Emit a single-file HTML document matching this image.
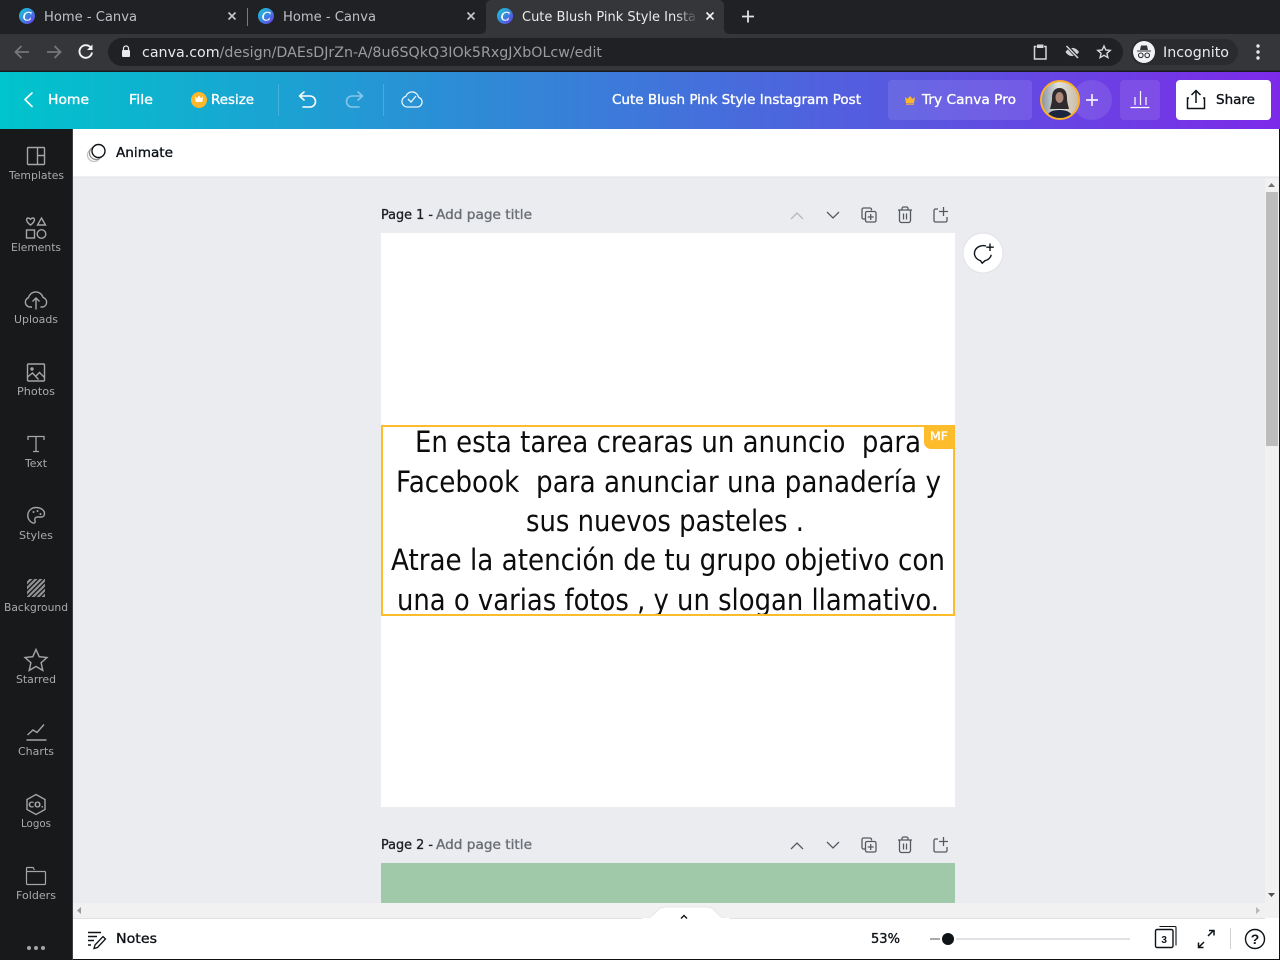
<!DOCTYPE html>
<html><head><meta charset="utf-8"><title>Cute Blush Pink Style Instagram Post - Canva</title>
<style>
html,body{margin:0;padding:0;width:1280px;height:960px;overflow:hidden;background:#ebecf0}
svg{display:block}
text{font-family:"Liberation Sans",sans-serif}
.d{font-family:"DejaVu Sans",sans-serif}
.m{font-family:"DejaVu Sans",sans-serif;font-size:13.5px;stroke-width:.35px}
.side text{font-family:"DejaVu Sans",sans-serif;font-size:11px;fill:#a9aaac}
.si{fill:none;stroke:#a4a5a7;stroke-width:1.4}
.pa{fill:none;stroke:#55595f;stroke-width:1.3}
.w{fill:none;stroke:#fff;stroke-width:1.6;stroke-linecap:round;stroke-linejoin:round}
</style></head><body>
<svg width="1280" height="960" viewBox="0 0 1280 960" xmlns="http://www.w3.org/2000/svg">
<defs>
<linearGradient id="hd" x1="0" y1="0" x2="1280" y2="0" gradientUnits="userSpaceOnUse"><stop offset="0" stop-color="#00c4cc"/><stop offset="1" stop-color="#7d2ae8"/></linearGradient>
<linearGradient id="fav" x1="0" y1="0" x2="1" y2="1"><stop offset="0" stop-color="#14cfd6"/><stop offset=".55" stop-color="#3d7fe0"/><stop offset="1" stop-color="#7030e8"/></linearGradient>
<linearGradient id="fade" x1="0" x2="1"><stop offset="0" stop-color="#35363a" stop-opacity="0"/><stop offset="1" stop-color="#35363a"/></linearGradient>
<linearGradient id="ph" x1="0" x2="1"><stop offset="0" stop-color="#7f8d97"/><stop offset=".45" stop-color="#dfe2e0"/><stop offset="1" stop-color="#c8b9a0"/></linearGradient>
<clipPath id="av"><circle cx="1060" cy="100" r="18.5"/></clipPath>
<clipPath id="hatch"><rect x="27" y="579" width="18" height="18"/></clipPath>
</defs>

<!-- Chrome -->
<rect width="1280" height="72" fill="#202124"/>
<path d="M480 34c4 0 6-2 6-6V6c0-4 2-6 6-6h226c4 0 6 2 6 6v22c0 4 2 6 6 6z" fill="#35363a"/>
<rect y="34" width="1280" height="36.500" fill="#35363a"/>
<rect y="70.500" width="1280" height="1.500" fill="#1a1b1d"/>
<rect x="247" y="8" width="1" height="18" fill="#7a7c80"/>

<g>
<circle cx="27" cy="16" r="8" fill="url(#fav)"/><circle cx="266" cy="16" r="8" fill="url(#fav)"/><circle cx="505" cy="16" r="8" fill="url(#fav)"/>
<text x="27" y="20.500" font-size="13" fill="#fff" stroke="#fff" stroke-width=".4" text-anchor="middle" font-style="italic" style="font-family:'Liberation Serif',serif">C</text>
<text x="266" y="20.500" font-size="13" fill="#fff" stroke="#fff" stroke-width=".4" text-anchor="middle" font-style="italic" style="font-family:'Liberation Serif',serif">C</text>
<text x="505" y="20.500" font-size="13" fill="#fff" stroke="#fff" stroke-width=".4" text-anchor="middle" font-style="italic" style="font-family:'Liberation Serif',serif">C</text>
</g>
<text class="d" x="44" y="21" font-size="13" fill="#bdc1c6" textLength="93" lengthAdjust="spacingAndGlyphs">Home - Canva</text>
<text class="d" x="283" y="21" font-size="13" fill="#bdc1c6" textLength="93" lengthAdjust="spacingAndGlyphs">Home - Canva</text>
<text class="d" x="522" y="21" font-size="13" fill="#e8eaed" textLength="174" lengthAdjust="spacingAndGlyphs">Cute Blush Pink Style Insta</text>
<rect x="676" y="6" width="22" height="20" fill="url(#fade)"/>
<g stroke-width="1.600" fill="none">
<path d="M228.500 12.500l7 7m0-7l-7 7M467.500 12.500l7 7m0-7l-7 7" stroke="#c4c7cb"/>
<path d="M706.500 12.500l7 7m0-7l-7 7" stroke="#f1f3f4"/>
<path d="M748 10.500v12M742 16.500h12" stroke="#dfe1e5" stroke-width="1.800"/>
</g>

<!-- toolbar -->
<path d="M29 52H16m5.500-6l-6 6 6 6" fill="none" stroke="#75777b" stroke-width="1.800"/>
<path d="M47 52h13m-5.500-6l6 6-6 6" fill="none" stroke="#75777b" stroke-width="1.800"/>
<path d="M91 48a6.300 6.300 0 1 0 1 4.500" fill="none" stroke="#f1f3f4" stroke-width="1.900"/><path d="M92.500 44.500v5.500H87z" fill="#f1f3f4"/>
<rect x="108" y="38" width="1015" height="28" rx="14" fill="#202124"/>
<rect x="122" y="50" width="8" height="7" rx="1" fill="#e8eaed"/><path d="M123.500 50v-1.500a2.500 2.500 0 0 1 5 0V50" fill="none" stroke="#e8eaed" stroke-width="1.200"/>
<text class="d" x="142" y="57" font-size="14" fill="#9a9ca0" textLength="460" lengthAdjust="spacingAndGlyphs"><tspan fill="#e8eaed">canva.com</tspan>/design/DAEsDJrZn-A/8u6SQkQ3IOk5RxgJXbOLcw/edit</text>
<path d="M1036.500 46.500h-2v12.500h11.500V46.500h-2" fill="none" stroke="#d5d7da" stroke-width="1.500"/><rect x="1037" y="44.500" width="6.500" height="3.500" fill="#d5d7da"/>
<path d="M1065.500 52c3.500-5.500 10-5.500 13.500 0-3.500 5.500-10 5.500-13.500 0z" fill="#d0d2d5"/><path d="M1067 46l11 12" stroke="#202124" stroke-width="3.500"/><path d="M1066.500 46l11.500 12" stroke="#d0d2d5" stroke-width="1.600"/>
<path d="M1104 46l1.800 4 4.400.4-3.300 2.900 1 4.300-3.900-2.300-3.900 2.300 1-4.300-3.300-2.900 4.400-.4z" fill="none" stroke="#d5d7da" stroke-width="1.400"/>
<rect x="1131" y="39" width="107" height="26" rx="13" fill="#2a2b2e"/>
<circle cx="1144" cy="52" r="11" fill="#f1f3f4"/>
<path d="M1137 50.500h14v1h-14zM1140 50l1-4.500h6l1 4.500z" fill="#35363a"/><circle cx="1140.800" cy="55.300" r="2.300" fill="none" stroke="#35363a" stroke-width="1.100"/><circle cx="1147.200" cy="55.300" r="2.300" fill="none" stroke="#35363a" stroke-width="1.100"/>
<text class="d" x="1163" y="57" font-size="14" fill="#e8eaed" textLength="66" lengthAdjust="spacingAndGlyphs">Incognito</text>
<g fill="#e8eaed"><circle cx="1258" cy="46" r="1.700"/><circle cx="1258" cy="52" r="1.700"/><circle cx="1258" cy="58" r="1.700"/></g>

<!-- Canva header -->
<rect y="72" width="1280" height="57" fill="url(#hd)"/>
<path class="w" d="M32 93l-7 6.500 7 7"/>
<g fill="#fff" stroke="#fff">
<text class="m" x="48" y="104" textLength="41" lengthAdjust="spacingAndGlyphs">Home</text>
<text class="m" x="129" y="104" textLength="24" lengthAdjust="spacingAndGlyphs">File</text>
<text class="m" x="211" y="104" textLength="43" lengthAdjust="spacingAndGlyphs">Resize</text>
<text class="m" x="612" y="104" textLength="249" lengthAdjust="spacingAndGlyphs">Cute Blush Pink Style Instagram Post</text>
<text class="m" x="922" y="104" textLength="94" lengthAdjust="spacingAndGlyphs">Try Canva Pro</text>
</g>
<circle cx="199" cy="100" r="8" fill="#fdb72c"/>
<path d="M195 96.500l2 2 2-3 2 3 2-2-.7 5.500h-6.600z" fill="#fff"/>
<rect x="278" y="84" width="1" height="32" fill="#fff" opacity=".18"/>
<rect x="383" y="84" width="1" height="32" fill="#fff" opacity=".18"/>
<path class="w" d="M304 92l-4.500 4 4.500 4M300 96h10a5.500 5.500 0 0 1 0 11h-7"/>
<path class="w" opacity=".45" d="M358 92l4.500 4-4.500 4M362 96h-10a5.500 5.500 0 0 0 0 11h7"/>
<path d="M407 107h10a5 5 0 0 0 1.500-9.800 6.500 6.500 0 0 0-12.500-1 5.500 5.500 0 0 0 1 10.800z" fill="none" stroke="#fff" stroke-width="1.300" opacity=".9"/><path d="M408 99l3 3 5-6" fill="none" stroke="#fff" stroke-width="1.300" opacity=".9"/>

<rect x="888" y="80" width="144" height="40" rx="4" fill="#fff" opacity=".1"/>
<path d="M905 97l2.500 2 2.500-3 2.500 3 2.500-2-1 6h-8z" fill="#fdb72c"/><rect x="906" y="103.500" width="8" height="1.200" fill="#fdb72c"/>
<circle cx="1092" cy="100" r="20" fill="#fff" opacity=".1"/>
<path d="M1092 94v12M1086 100h12" stroke="#fff" stroke-width="1.700" opacity=".9"/>
<g clip-path="url(#av)">
<rect x="1040" y="80" width="40" height="40" fill="url(#ph)"/>
<path d="M1052 98c0-7 3-10 7.500-10s7.500 3 7.500 10c0 4 1 7 2 11h-19c1-4 2-7 2-11z" fill="#2f2a2d"/>
<ellipse cx="1059.500" cy="97.500" rx="4" ry="5.500" fill="#b08a78"/>
<path d="M1046 120c1-8 6-10 13.500-10s12.500 2 14 10z" fill="#1b2540"/>
</g>
<circle cx="1060" cy="100" r="19" fill="none" stroke="#fdb02c" stroke-width="2"/>
<rect x="1120" y="80" width="40" height="40" rx="4" fill="#fff" opacity=".1"/>
<path d="M1130.500 107.500h19M1135 105V97M1140.500 105V91M1146 105V97" stroke="#fff" stroke-width="1.200" fill="none"/>
<rect x="1176" y="80" width="95" height="40" rx="4" fill="#fff"/>
<path d="M1189 98h-1.500v10.500h17V98H1203M1196 103V90.500M1191.500 95l4.500-4.500 4.500 4.500" fill="none" stroke="#0e1318" stroke-width="1.500"/>
<text class="m" x="1216" y="104" fill="#0e1318" stroke="#0e1318" textLength="39" lengthAdjust="spacingAndGlyphs">Share</text>

<!-- Editor background -->
<rect x="73" y="129" width="1207" height="831" fill="#ebecf0"/>
<rect x="73" y="129" width="1207" height="48" fill="#fff"/>
<rect x="73" y="176.500" width="1207" height="1" fill="#dfe1e5"/>
<circle cx="94" cy="155" r="6.500" fill="#fff" stroke="#c0c1c3" stroke-width="1.300"/>
<circle cx="96" cy="153" r="6.500" fill="#fff" stroke="#8c8d8f" stroke-width="1.300"/>
<circle cx="98.500" cy="151" r="6.500" fill="#fff" stroke="#0e1318" stroke-width="1.400"/>
<text class="m" x="116" y="157" fill="#0e1318" stroke="#0e1318" textLength="57" lengthAdjust="spacingAndGlyphs">Animate</text>

<!-- Page 1 -->
<text class="m" x="381" y="219" fill="#1d2126" stroke="#1d2126" textLength="52" lengthAdjust="spacingAndGlyphs">Page 1 -</text>
<text class="m" x="436" y="219" fill="#6b6f76" stroke="#6b6f76" textLength="96" lengthAdjust="spacingAndGlyphs">Add page title</text>
<path d="M791 219l6-6 6 6" fill="none" stroke="#b5b7bb" stroke-width="1.300"/>
<path d="M827 212l6 6 6-6" fill="none" stroke="#55595f" stroke-width="1.300"/>
<g class="pa" id="acts">
<path d="M865.500 219h-2a1.500 1.500 0 0 1-1.500-1.500v-8a1.500 1.500 0 0 1 1.500-1.500h6.500a1.500 1.500 0 0 1 1.500 1.500v1"/><rect x="865.500" y="211.500" width="10.500" height="10.500" rx="1.500"/><path d="M870.700 214v6M867.700 217h6"/>
<path d="M898 210h14M902 210v-1.500a1.500 1.500 0 0 1 1.500-1.500h3a1.500 1.500 0 0 1 1.500 1.500V210M899.500 210v10.500a2 2 0 0 0 2 2h7a2 2 0 0 0 2-2V210M903.500 213.500v6M906.500 213.500v6"/>
<path d="M938 209h-2.500a1.500 1.500 0 0 0-1.500 1.500v10a1.500 1.500 0 0 0 1.500 1.500h10a1.500 1.500 0 0 0 1.500-1.500V217M943.500 207v9M939 211.500h9"/>
</g>
<rect x="381" y="233" width="574" height="574" fill="#fff"/>
<circle cx="983" cy="253" r="20.500" fill="#000" opacity=".04"/>
<circle cx="983" cy="253" r="19.500" fill="#fff"/>
<path d="M986 246a8.500 7.500 0 1 0-5.500 14.700l1.700 2.500 2.800-2.500c3-.6 5.700-3 6.300-6" fill="none" stroke="#0e1318" stroke-width="1.400"/>
<path d="M990 243.500v7.500M986.300 247.200h7.500" stroke="#0e1318" stroke-width="1.400" fill="none"/>

<g font-size="29" fill="#0c0c0c">
<text class="d" x="415" y="452" textLength="506" lengthAdjust="spacingAndGlyphs" xml:space="preserve">En esta tarea crearas un anuncio  para</text>
<text class="d" x="396" y="492" textLength="545" lengthAdjust="spacingAndGlyphs" xml:space="preserve">Facebook  para anunciar una panadería y</text>
<text class="d" x="526" y="531" textLength="278" lengthAdjust="spacingAndGlyphs">sus nuevos pasteles .</text>
<text class="d" x="391" y="570" textLength="554" lengthAdjust="spacingAndGlyphs">Atrae la atención de tu grupo objetivo con</text>
<text class="d" x="397" y="610" textLength="542" lengthAdjust="spacingAndGlyphs">una o varias fotos , y un slogan llamativo.</text>
</g>
<rect x="382" y="426" width="572" height="189" fill="none" stroke="#fdbc2c" stroke-width="2"/>
<path d="M924 425h31v24h-24a7 7 0 0 1-7-7z" fill="#fdbc2c"/>
<text class="d" x="930" y="440" font-size="11.500" fill="#fff" stroke="#fff" stroke-width=".3" textLength="18" lengthAdjust="spacingAndGlyphs">MF</text>

<!-- Page 2 -->
<text class="m" x="381" y="849" fill="#1d2126" stroke="#1d2126" textLength="52" lengthAdjust="spacingAndGlyphs">Page 2 -</text>
<text class="m" x="436" y="849" fill="#6b6f76" stroke="#6b6f76" textLength="96" lengthAdjust="spacingAndGlyphs">Add page title</text>
<path d="M791 849l6-6 6 6" fill="none" stroke="#55595f" stroke-width="1.300"/>
<path d="M827 842l6 6 6-6" fill="none" stroke="#55595f" stroke-width="1.300"/>
<g class="pa" transform="translate(0 630)">
<path d="M865.500 219h-2a1.500 1.500 0 0 1-1.500-1.500v-8a1.500 1.500 0 0 1 1.500-1.500h6.500a1.500 1.500 0 0 1 1.500 1.500v1"/><rect x="865.500" y="211.500" width="10.500" height="10.500" rx="1.500"/><path d="M870.700 214v6M867.700 217h6"/>
<path d="M898 210h14M902 210v-1.500a1.500 1.500 0 0 1 1.500-1.500h3a1.500 1.500 0 0 1 1.500 1.500V210M899.500 210v10.500a2 2 0 0 0 2 2h7a2 2 0 0 0 2-2V210M903.500 213.500v6M906.500 213.500v6"/>
<path d="M938 209h-2.500a1.500 1.500 0 0 0-1.500 1.500v10a1.500 1.500 0 0 0 1.500 1.500h10a1.500 1.500 0 0 0 1.500-1.500V217M943.500 207v9M939 211.500h9"/>
</g>
<rect x="381" y="863" width="574" height="40" fill="#a0c9aa"/>

<!-- Scrollbars -->
<rect x="1265" y="178" width="14" height="740" fill="#f1f1f1"/>
<rect x="1266" y="192" width="12" height="254" fill="#bcbcbc"/>
<path d="M1268 187l3.500-4 3.500 4z" fill="#6f6f6f"/>
<path d="M1268 893l3.500 4 3.500-4z" fill="#505050"/>
<rect x="73" y="903" width="1192" height="15" fill="#f1f1f1"/>
<path d="M81 907v7l-4-3.500z" fill="#9a9a9a"/>
<path d="M1256 907v7l4-3.500z" fill="#b8b8b8"/>

<!-- Bottom bar -->
<rect x="73" y="918" width="1207" height="41" fill="#fff"/>
<rect x="73" y="918" width="1192" height="1" fill="#dfe0e3"/>
<path d="M642 919c8 0 10-3 14-7 3-4 6-5 11-5h38c5 0 8 1 11 5 4 4 6 7 14 7z" fill="#fff" stroke="#e6e7e9"/>
<rect x="642" y="918" width="88" height="3" fill="#fff"/>
<path d="M681 918.500l3-3 3 3" fill="none" stroke="#0e1318" stroke-width="1.400"/>
<path d="M88 932.500h13M88 936.500h9M88 940.500h6M88 945h3" fill="none" stroke="#0e1318" stroke-width="1.400"/>
<path d="M95 945l8-8.500 2.500 2.500-8 8.500-3.500 1z" fill="none" stroke="#0e1318" stroke-width="1.300"/>
<text class="m" x="116" y="943" fill="#0e1318" stroke="#0e1318" textLength="41" lengthAdjust="spacingAndGlyphs">Notes</text>
<text class="m" x="871" y="943" fill="#0e1318" stroke="#0e1318" textLength="29" lengthAdjust="spacingAndGlyphs">53%</text>
<rect x="930" y="938" width="10" height="2" fill="#a8a9ab"/>
<rect x="956" y="938" width="174" height="2" fill="#dfe1e5"/>
<circle cx="948" cy="939" r="6" fill="#0e1318"/>
<path d="M1159.500 926.500h15.500a1 1 0 0 1 1 1v18" fill="none" stroke="#0e1318" stroke-width="1.100"/>
<rect x="1155.500" y="929.500" width="17.500" height="18" rx="1.500" fill="#fff" stroke="#0e1318" stroke-width="1.400"/>
<text x="1164.200" y="943" font-size="10" font-weight="bold" fill="#0e1318" text-anchor="middle">3</text>
<path d="M1208 936l5.500-5.500M1209 930.500h5v5M1204 942l-5.500 5.500M1198.500 942.500v5h5" fill="none" stroke="#0e1318" stroke-width="1.500"/>
<rect x="1230" y="928" width="1" height="21" fill="#cfd1d4"/>
<circle cx="1255" cy="939" r="9.500" fill="none" stroke="#0e1318" stroke-width="1.400"/>
<text x="1255" y="944" font-size="14" font-weight="bold" fill="#0e1318" text-anchor="middle">?</text>

<!-- Frame edges -->
<rect x="1279" y="129" width="1" height="831" fill="#111"/>
<rect x="73" y="959" width="1207" height="1" fill="#111"/>

<!-- Sidebar -->
<rect x="0" y="129" width="72.500" height="831" fill="#18191b"/>
<rect x="72" y="129" width="1" height="831" fill="#3e4043"/>
<g class="side">
<g class="si">
<rect x="27.500" y="147.500" width="17" height="17" rx="1"/><path d="M37.500 147.500v17M37.500 155.500h7"/>
<path d="M30.500 225c-5-3.500-4.500-7-2.500-7 1.200 0 2 .7 2.500 1.300.5-.6 1.300-1.300 2.500-1.300 2 0 2.500 3.500-2.500 7z"/>
<path d="M41.500 218l4 7h-8z"/><rect x="26.500" y="230" width="8" height="8"/><circle cx="41.500" cy="234" r="4.300"/>
<path d="M32 307h-2a4.800 4.800 0 0 1-1.500-9.300 7.500 7.500 0 0 1 14.500-.3 5 5 0 0 1 0 9.600h-2.500M36 309.500v-11M32.500 301.500l3.500-3.500 3.500 3.500"/>
<rect x="27.500" y="364" width="17" height="17" rx="1"/><circle cx="32" cy="369" r="1" fill="#a4a5a7"/><path d="M27.500 377l5-4 6 6.500M36 376l3.500-3.500 5 5"/>
<path d="M28 440v-3.500h16v3.500M36 436.500v15M33 451.500h6" stroke-width="1.300"/>
<path d="M36 507.500a8 8 0 0 0-3 15.500c2 .5 2.500-1 2-2.500-.7-2 .5-3.500 2.500-3.500h4c2 0 3-1.500 3-3.500 0-3.500-4-6-8.500-6z"/>
<path d="M36 649.500l3.200 7.200 7.800.8-5.900 5.200 1.700 7.700-6.800-4-6.800 4 1.700-7.700-5.900-5.200 7.800-.8z"/>
<path d="M26.500 740h20" stroke-width="1.600"/><path d="M27.500 735l5.500-5 4 2.500 7-8"/>
<path d="M36 794.500l9 5v10l-9 5-9-5v-10z"/>
<path d="M26.500 883v-14.500a1 1 0 0 1 1-1h5.500l1.500 2.500M26.500 872.500a1 1 0 0 1 1-1h17a1 1 0 0 1 1 1v11a1 1 0 0 1-1 1h-17a1 1 0 0 1-1-1z" stroke-width="1.200"/>
</g>
<circle cx="33.500" cy="512" r="1" fill="#a4a5a7"/><circle cx="37.500" cy="511" r="1" fill="#a4a5a7"/><circle cx="40.500" cy="514" r="1" fill="#a4a5a7"/>
<g stroke="#929395" stroke-width="2.200" fill="none" clip-path="url(#hatch)">
<path d="M25 585l8-8M25 590l13-13M25 595l18-18M27 598l20-20M32 598l15-15M37 598l10-10M42 598l5-5"/>
</g>
<text x="36" y="807.500" text-anchor="middle" style="font-size:8px;font-weight:bold" fill="#a4a5a7">CO.</text>
<text x="9" y="179" textLength="55" lengthAdjust="spacingAndGlyphs">Templates</text>
<text x="11" y="251" textLength="50" lengthAdjust="spacingAndGlyphs">Elements</text>
<text x="14" y="323" textLength="44" lengthAdjust="spacingAndGlyphs">Uploads</text>
<text x="17" y="395" textLength="38" lengthAdjust="spacingAndGlyphs">Photos</text>
<text x="25" y="467" textLength="22" lengthAdjust="spacingAndGlyphs">Text</text>
<text x="19" y="539" textLength="34" lengthAdjust="spacingAndGlyphs">Styles</text>
<text x="4" y="611" textLength="64" lengthAdjust="spacingAndGlyphs">Background</text>
<text x="16" y="683" textLength="40" lengthAdjust="spacingAndGlyphs">Starred</text>
<text x="18" y="755" textLength="36" lengthAdjust="spacingAndGlyphs">Charts</text>
<text x="21" y="827" textLength="30" lengthAdjust="spacingAndGlyphs">Logos</text>
<text x="16" y="899" textLength="40" lengthAdjust="spacingAndGlyphs">Folders</text>
<g fill="#a4a5a7"><circle cx="29" cy="948" r="2"/><circle cx="36" cy="948" r="2"/><circle cx="43" cy="948" r="2"/></g>
</g>
</svg>
</body></html>
